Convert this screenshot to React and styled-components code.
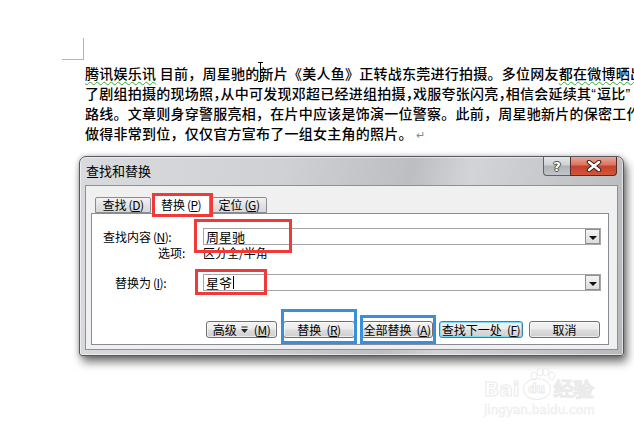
import React from "react"
import styled, { createGlobalStyle } from "styled-components"

const GlobalStyle = createGlobalStyle`
  html, body {
    margin: 0;
    padding: 0;
    background: #ffffff;
  }
  body {
    font-family: "Noto Sans CJK SC", "Noto Sans", sans-serif;
  }
`

export default function App() {
  return (
    <Page>
      <GlobalStyle />
      <Corner />
      <Doc>
        <Line>
          <Squiggle>腾讯娱乐讯</Squiggle> 目前，周星驰的
          <IBeam />
          新片《美人鱼》正转战东莞进行拍摄。多位网友<Squiggle>都在微博晒出</Squiggle>
        </Line>
        <Line>
          了剧组拍摄的现场照<Half>，</Half>从中可发现邓超已经进组拍摄<Half>，</Half>戏服夸张闪亮<Half>，</Half>相信会延续其<Quote>“</Quote>逗比<Quote>”</Quote>
        </Line>
        <Line>路线。文章则身穿警服亮相，在片中应该是饰演一位警察。此前，周星驰新片的保密工作</Line>
        <Line>
          做得非常到位，仅仅官方宣布了一组女主角的照片。<Para>↵</Para>
        </Line>
      </Doc>

      <Dialog>
        <TitleBar>
          <Title>查找和替换</Title>
          <Caption>
            <HelpBtn>?</HelpBtn>
            <CloseBtn>
              <svg width="16" height="12" viewBox="-8 -6 16 12">
                <path d="M-5 -4 L5 4 M5 -4 L-5 4" stroke="#3b2520" strokeWidth="4.5" strokeLinecap="round" />
                <path d="M-5 -4 L5 4 M5 -4 L-5 4" stroke="#ffffff" strokeWidth="2.4" strokeLinecap="round" />
              </svg>
            </CloseBtn>
          </Caption>
        </TitleBar>

        <Client>
          <TabRow>
            <Tab>查找<Key>(<u>D</u>)</Key></Tab>
            <Tab $active>
              替换<Key>(<u>P</u>)</Key>
              <Mark $color="#f03a3a" style={{ left: -1, top: -1, width: 61, height: 24 }} />
            </Tab>
            <Tab>定位<Key>(<u>G</u>)</Key></Tab>
          </TabRow>

          <Panel>
            <Field>
              <Label>查找内容<Key>(<u>N</u>)</Key>:</Label>
              <Combo>
                <ComboText>周星驰</ComboText>
                <DropBtn><Arrow /></DropBtn>
                <Mark $color="#f03a3a" style={{ left: -10, top: -10, width: 98, height: 34 }} />
              </Combo>
            </Field>
            <Options>
              <Label $indent={55}>选项:</Label>
              <span>区分全/半角</span>
            </Options>
            <Field $gap={14}>
              <Label $indent={12}>替换为<Key>(<u>I</u>)</Key>:</Label>
              <Combo>
                <ComboText>星爷<TextCaret /></ComboText>
                <DropBtn><Arrow /></DropBtn>
                <Mark $color="#f03a3a" style={{ left: -9, top: -6, width: 72, height: 26 }} />
              </Combo>
            </Field>

            <Buttons>
              <Button $w={71}>
                高级
                <svg width="9" height="8" viewBox="0 0 9 8">
                  <rect x="1.5" y="0.5" width="6" height="1" fill="#222" />
                  <path d="M1 3 L8 3 L4.5 7 Z" fill="#222" />
                </svg>
                <Key>(<u>M</u>)</Key>
              </Button>
              <Button $w={72}>
                替换<Key>(<u>R</u>)</Key>
                <Mark $color="#3a8edb" style={{ left: -3, top: -13, width: 76, height: 35 }} />
              </Button>
              <Button $w={72}>
                全部替换<Key>(<u>A</u>)</Key>
                <Mark $color="#3a8edb" style={{ left: -2, top: -7, width: 76, height: 29 }} />
              </Button>
              <Button $w={84} $default>查找下一处<Key>(<u>F</u>)</Key></Button>
              <Button $w={71}>取消</Button>
            </Buttons>
          </Panel>
        </Client>
      </Dialog>

      <Watermark>
        <svg width="30" height="14" viewBox="0 0 30 14" style={{ marginLeft: 44 }}>
          <g fill="none" stroke="#ececec" strokeWidth="1">
            <ellipse cx="6" cy="9" rx="3" ry="4" />
            <ellipse cx="12" cy="5" rx="3" ry="4" />
            <ellipse cx="18" cy="5" rx="3" ry="4" />
            <ellipse cx="24" cy="9" rx="3" ry="4" />
          </g>
        </svg>
        <MarkRow>
          <span>Bai</span>
          <DuBadge>du</DuBadge>
          <span>经验</span>
        </MarkRow>
        <MarkUrl>jingyan.baidu.com</MarkUrl>
      </Watermark>
    </Page>
  )
}

const Page = styled.div`
  position: relative;
  width: 634px;
  height: 433px;
  overflow: hidden;
  padding-top: 38px;
  box-sizing: border-box;
  background: #ffffff;
`
const Corner = styled.div`
  margin-left: 62px;
  width: 22px;
  height: 22px;
  box-sizing: border-box;
  border-right: 1px solid #b4b4b4;
  border-bottom: 1px solid #b4b4b4;
`
const Doc = styled.div`
  margin: 3px 0 0 85px;
  font-size: 14px;
  font-weight: 500;
  letter-spacing: 0.25px;
  line-height: 20px;
  color: #000;
  white-space: nowrap;
`
const Line = styled.div`
  height: 20px;
`
const Squiggle = styled.span`
  text-decoration: underline wavy #35a835;
  text-decoration-thickness: 1px;
  text-underline-offset: 2px;
`
/* full-width comma squeezed to half advance, as the source renders it */
const Half = styled.span`
  letter-spacing: -6.75px;
`
const Quote = styled.span`
  font-family: "Liberation Sans", sans-serif;
  letter-spacing: 1px;
`
const Para = styled.span`
  margin-left: 3px;
  font-size: 11px;
  font-weight: normal;
  color: #888;
`
const IBeam = styled.span`
  position: relative;
  display: inline-block;
  width: 0;
  height: 14px;

  &::before {
    content: "";
    position: absolute;
    left: 1px;
    top: -3px;
    width: 1px;
    height: 20px;
    background: #000;
  }
  &::after {
    content: "";
    position: absolute;
    left: -1px;
    top: -3px;
    width: 5px;
    height: 20px;
    box-sizing: border-box;
    border-top: 1px solid #000;
    border-bottom: 1px solid #000;
  }
`

const Dialog = styled.div`
  margin: 13px 0 0 79px;
  width: 545px;
  height: 200px;
  box-sizing: border-box;
  padding: 0 5px 5px;
  display: flex;
  flex-direction: column;
  border: 1px solid #55585c;
  border-radius: 7px 7px 3px 3px;
  background: linear-gradient(100deg, #d8dadd 0%, #cfd1d4 35%, #bcbec1 58%, #d2d4d7 68%, #b7b9bc 100%);
  box-shadow: inset 0 0 0 1px rgba(255, 255, 255, 0.55), 3px 6px 10px rgba(0, 0, 0, 0.55),
    0 0 5px rgba(0, 0, 0, 0.25);
`
const TitleBar = styled.div`
  height: 28px;
  display: flex;
  justify-content: space-between;
  align-items: flex-start;
  padding: 0 1px;
`
const Title = styled.div`
  padding-top: 5px;
  font-size: 13px;
  line-height: 17px;
  color: #000;
`
const Caption = styled.div`
  display: flex;
`
const HelpBtn = styled.div`
  width: 27px;
  height: 19px;
  box-sizing: border-box;
  border: 1px solid #5e6266;
  border-top: none;
  border-right: none;
  border-radius: 0 0 0 4px;
  background: linear-gradient(#e4e6e8 0%, #cfd1d4 45%, #aeb1b5 50%, #c3c6c9 100%);
  display: flex;
  align-items: center;
  justify-content: center;
  font-family: "DejaVu Sans", sans-serif;
  font-weight: bold;
  font-size: 13px;
  color: #fff;
  text-shadow: 0 0 1px #333, 1px 0 0 #555, -1px 0 0 #555, 0 1px 0 #555, 0 -1px 0 #555;
`
const CloseBtn = styled.div`
  width: 47px;
  height: 19px;
  box-sizing: border-box;
  border: 1px solid #5a2b22;
  border-top: none;
  border-radius: 0 0 4px 0;
  background: linear-gradient(#e9a797 0%, #d9735f 45%, #c4412b 50%, #d3563c 100%);
  display: flex;
  align-items: center;
  justify-content: center;
`
const Client = styled.div`
  height: 165px;
  box-sizing: border-box;
  border: 1px solid #8d9094;
  background: #f0f0f0;
  padding: 7px 0 0 5px;
  font-size: 12px;
  color: #000;
`
const TabRow = styled.div`
  position: relative;
  z-index: 1;
  display: flex;
  align-items: flex-end;
  gap: 1px;
  height: 21px;
  margin-bottom: -1px;
  padding-left: 4px;
`
const Tab = styled.div`
  position: relative;
  width: ${(p) => (p.$active ? 58 : 56)}px;
  height: ${(p) => (p.$active ? 21 : 16)}px;
  margin-bottom: ${(p) => (p.$active ? 0 : 1)}px;
  box-sizing: border-box;
  border: 1px solid #898c95;
  border-bottom: ${(p) => (p.$active ? "none" : "1px solid #898c95")};
  border-radius: 2px 2px 0 0;
  background: ${(p) => (p.$active ? "#ffffff" : "linear-gradient(#f3f3f3, #e3e3e3 50%, #d7d7d7)")};
  display: flex;
  align-items: center;
  justify-content: center;
  font-size: 12px;
  line-height: 14px;
  padding-top: ${(p) => (p.$active ? 1 : 0)}px;
`
const Key = styled.span`
  margin-left: 2px;
  letter-spacing: -0.5px;
  u {
    text-underline-offset: 1px;
  }
`
const Panel = styled.div`
  width: 518px;
  height: 132px;
  box-sizing: border-box;
  border: 1px solid #898c95;
  background: #ffffff;
  padding: 14px 7px 0 11px;
`
const Field = styled.div`
  display: flex;
  align-items: center;
  height: 17px;
  margin-top: ${(p) => p.$gap || 0}px;
`
const Label = styled.div`
  width: 100px;
  flex: none;
  box-sizing: border-box;
  padding-left: ${(p) => p.$indent || 0}px;
  white-space: nowrap;
`
const Options = styled.div`
  display: flex;
  align-items: center;
  height: 14px;
  margin-top: 1px;
  line-height: 14px;
`
const Combo = styled.div`
  position: relative;
  display: flex;
  width: 398px;
  height: 17px;
  box-sizing: border-box;
  border: 1px solid #a3a5a8;
  background: #fff;
`
const ComboText = styled.div`
  flex: 1;
  padding-left: 2px;
  font-size: 13px;
  line-height: 15px;
  display: flex;
  align-items: center;
`
const TextCaret = styled.span`
  display: inline-block;
  width: 1px;
  height: 13px;
  margin-left: 1px;
  background: #000;
`
const DropBtn = styled.div`
  width: 15px;
  height: 15px;
  box-sizing: border-box;
  border: 1px solid #8e8f92;
  background: linear-gradient(#f4f4f4, #dcdcdc);
  display: flex;
  align-items: center;
  justify-content: center;
`
const Arrow = styled.span`
  width: 0;
  height: 0;
  margin-top: 2px;
  border-left: 4px solid transparent;
  border-right: 4px solid transparent;
  border-top: 4px solid #111;
`
const Mark = styled.span`
  position: absolute;
  box-sizing: border-box;
  border: 3px solid ${(p) => p.$color};
  pointer-events: none;
  z-index: 2;
`
const Buttons = styled.div`
  display: flex;
  justify-content: flex-end;
  gap: 6px;
  margin: 30px 1px 0 0;
`
const Button = styled.div`
  position: relative;
  width: ${(p) => p.$w}px;
  height: 17px;
  box-sizing: border-box;
  border: 1px solid ${(p) => (p.$default ? "#3c7fb1" : "#707070")};
  border-radius: 3px;
  background: linear-gradient(#f3f3f3 0%, #ebebeb 48%, #dddddd 52%, #cfcfcf 100%);
  box-shadow: ${(p) => (p.$default ? "inset 0 0 0 1px #7fdcf7" : "inset 0 0 0 1px rgba(255,255,255,0.6)")};
  display: flex;
  align-items: center;
  justify-content: center;
  gap: 3px;
  font-size: 12px;
  line-height: 15px;
  white-space: nowrap;
`

const Watermark = styled.div`
  position: absolute;
  left: 484px;
  top: 367px;
  display: flex;
  flex-direction: column;
  color: transparent;
  -webkit-text-stroke: 1px #ebebeb;
`
const MarkRow = styled.div`
  display: flex;
  align-items: center;
  gap: 3px;
  margin-top: -3px;
  font-family: "DejaVu Sans", sans-serif;
  font-size: 20px;
  font-weight: bold;
  line-height: 22px;
`
const DuBadge = styled.span`
  width: 26px;
  height: 20px;
  border: 1px solid #ebebeb;
  border-radius: 50%;
  font-size: 12px;
  line-height: 20px;
  text-align: center;
`
const MarkUrl = styled.div`
  margin-top: 3px;
  font-family: "DejaVu Sans", sans-serif;
  font-size: 12px;
  line-height: 14px;
  -webkit-text-stroke: 0.6px #ececec;
`
